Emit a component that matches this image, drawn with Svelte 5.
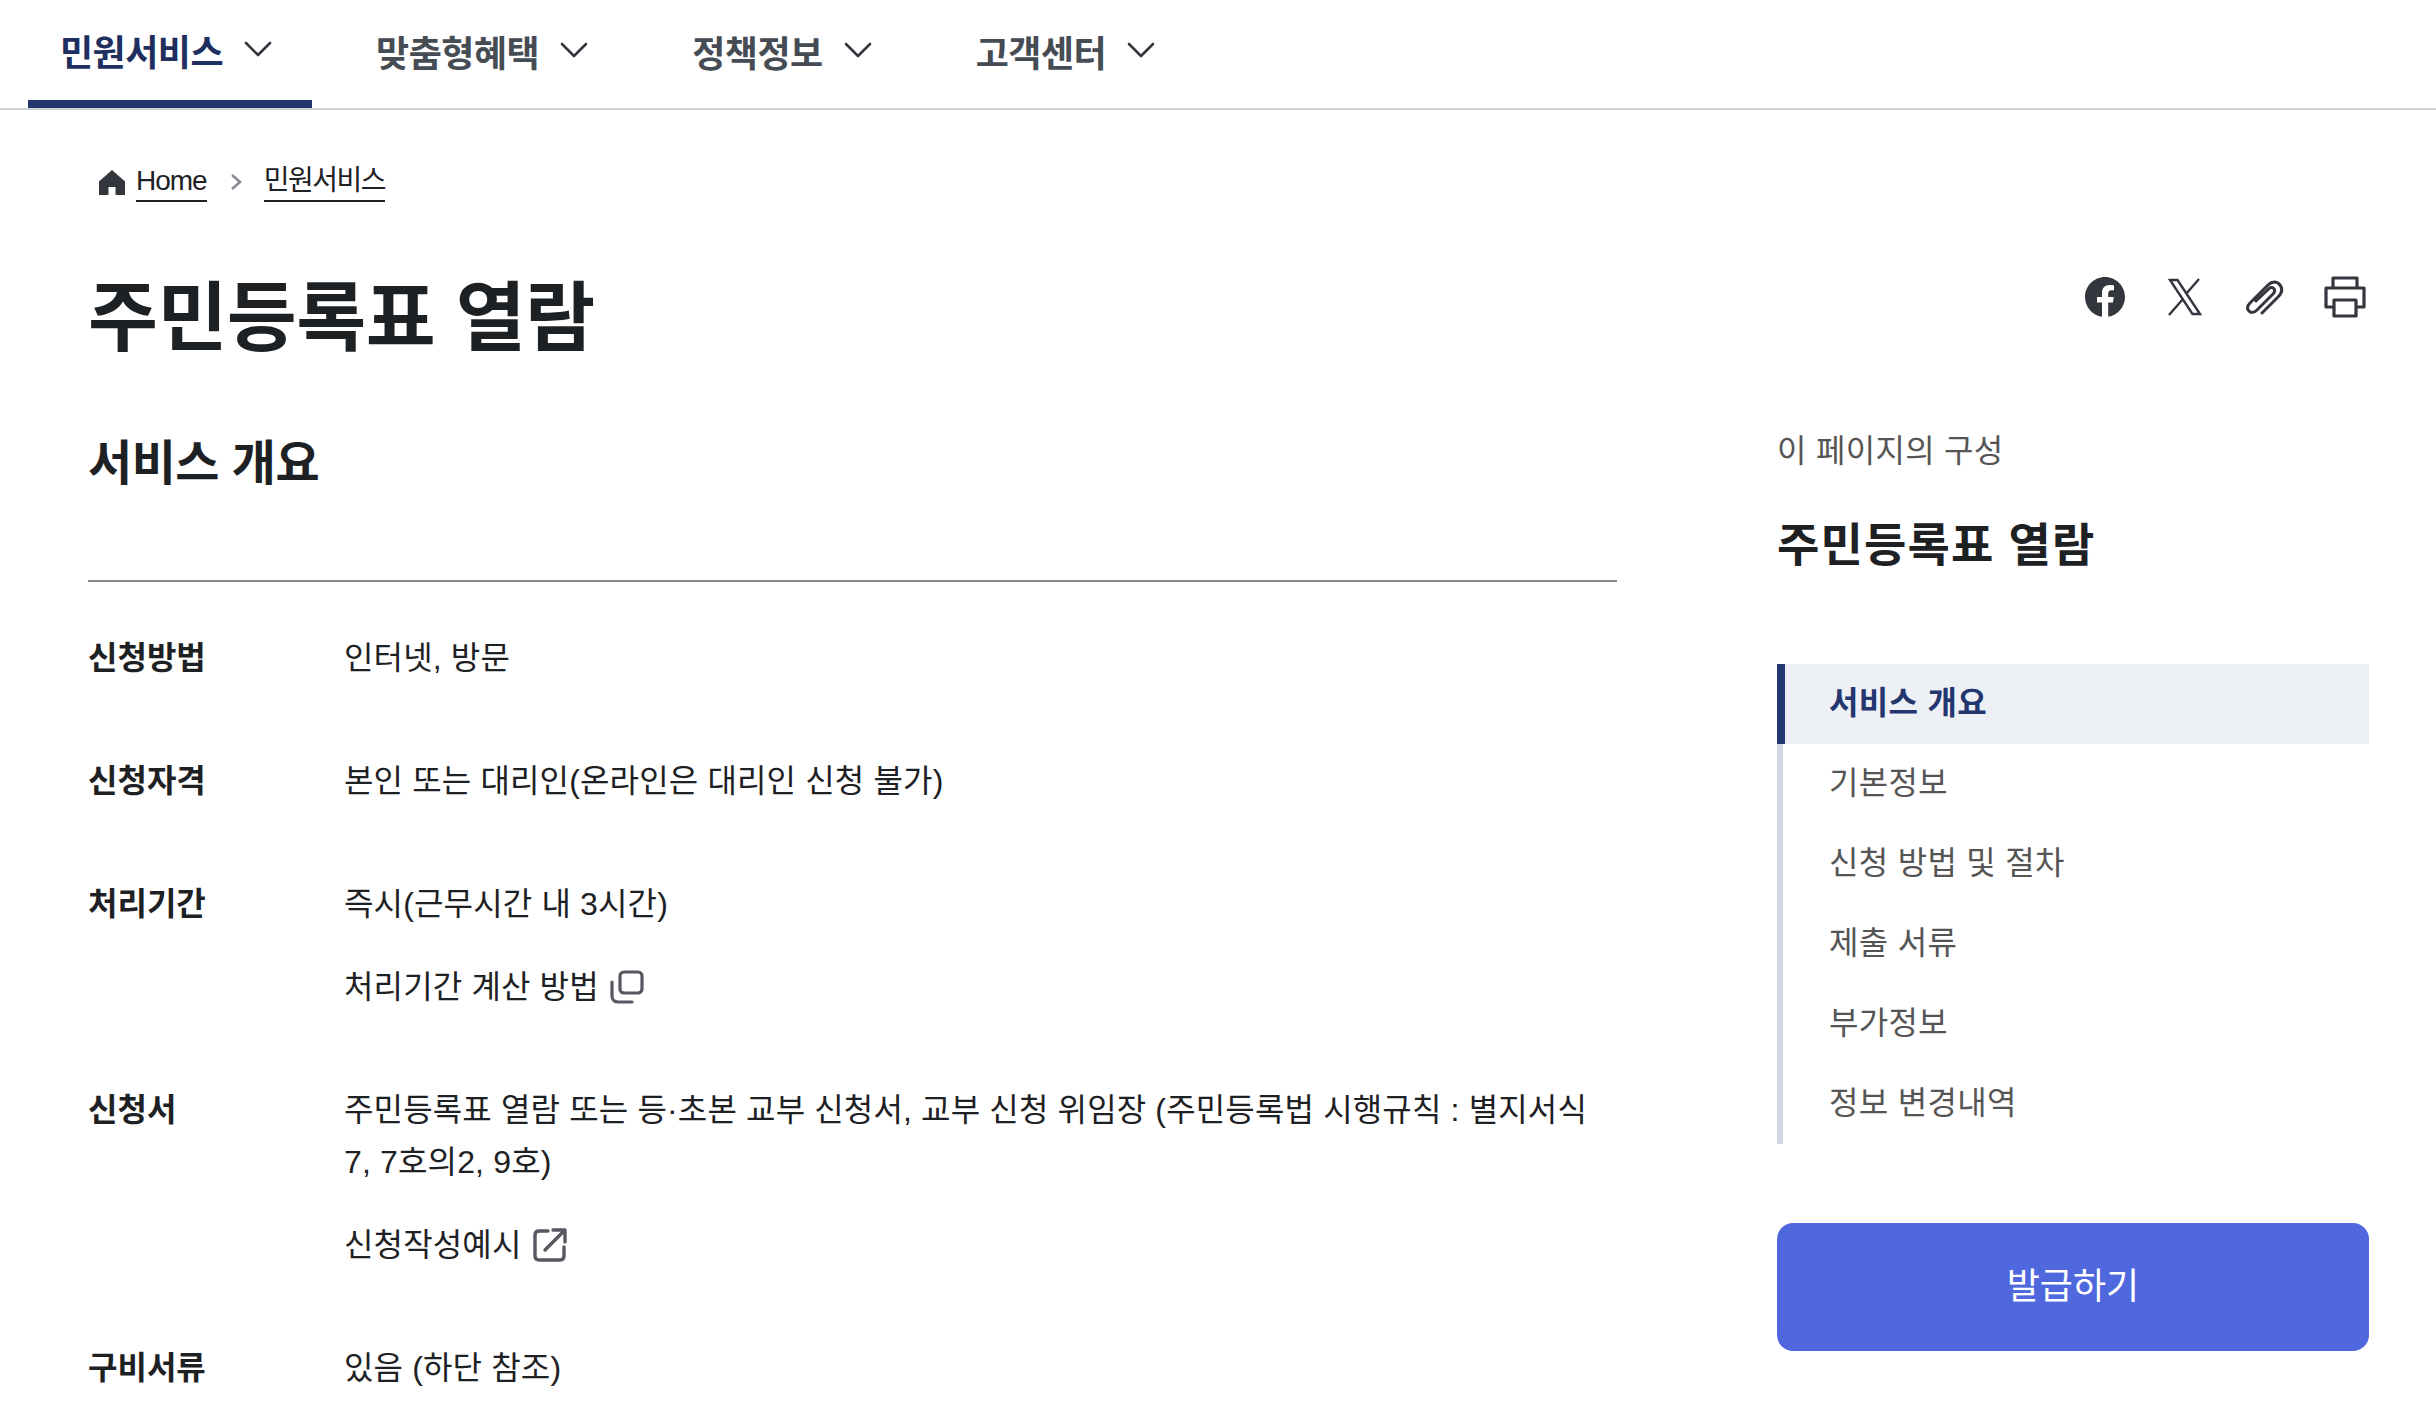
<script>
  const navItems = ['민원서비스', '맞춤형혜택', '정책정보', '고객센터'];
  const tocItems = ['서비스 개요', '기본정보', '신청 방법 및 절차', '제출 서류', '부가정보', '정보 변경내역'];
</script>

<div class="page">
  <nav class="nav">
    {#each navItems as item, i}
      <a class="nav-item" class:active={i === 0} href="#top">
        <span>{item}</span>
        <svg width="30" height="30" viewBox="0 0 30 30" fill="none" stroke="currentColor" stroke-width="2.6" stroke-linecap="round" stroke-linejoin="round"><path d="M3 8l12 12L27 8" /></svg>
      </a>
    {/each}
  </nav>

  <div class="crumbs">
    <svg class="home" width="28" height="28" viewBox="0 0 28 28"><path fill="#33363d" d="M14 2L1 13.500V27h9.500v-8h7v8H27V13.500z" /></svg>
    <a href="#top">Home</a>
    <svg class="sep" width="16" height="20" viewBox="0 0 16 20" fill="none" stroke="#8a8a94" stroke-width="2.6"><path d="M3 3l8 7-8 7" /></svg>
    <a class="crumb-ko" href="#top">민원서비스</a>
  </div>

  <header class="head">
    <h1>주민등록표 열람</h1>
    <div class="share">
      <svg width="42" height="42" viewBox="0 0 42 42"><path fill="#33363d" d="M41 21C41 10 32 1 21 1S1 10 1 21c0 10 7.300 18.300 17 19.800V26.500h-5V21h5v-4.200c0-5 3-7.800 7.600-7.800 2.200 0 4.400.4 4.400.4v4.900h-2.500c-2.500 0-3.300 1.500-3.300 3.100V21h5.600l-.9 5.500h-4.700v14.300C33.700 39.300 41 31 41 21z" /></svg>
      <svg width="42" height="42" viewBox="0 0 42 42" fill="none" stroke="#33363d" stroke-width="2.400"><path d="M6 4h7.500l22.500 34h-7.500zM35 3L22 18M19 23L5 39" /></svg>
      <svg width="42" height="42" viewBox="0 0 42 42" fill="none" stroke="#33363d" stroke-width="3" stroke-linecap="round"><path d="M18 37l16-16c4-4 5-8 2-12s-8-4-12 0L6 27c-3 3-3 6-1 8s5 2 8-1l16-16c2-2 2-4 .8-5.500s-3.500-1.300-5.300.5L12 25" /></svg>
      <svg width="42" height="42" viewBox="0 0 42 42" fill="none" stroke="#33363d" stroke-width="3.200" stroke-linejoin="round"><path d="M9 31H2V12h38v19h-7" /><path d="M9 12V2h24v10" /><path d="M10 24h22v16H10z" /></svg>
    </div>
  </header>

  <div class="layout">
    <main class="main">
      <h2>서비스 개요</h2>
      <dl class="info">
        <div class="row">
          <dt>신청방법</dt>
          <dd>인터넷, 방문</dd>
        </div>
        <div class="row">
          <dt>신청자격</dt>
          <dd>본인 또는 대리인(온라인은 대리인 신청 불가)</dd>
        </div>
        <div class="row">
          <dt>처리기간</dt>
          <dd>
            즉시(근무시간 내 3시간)
            <a class="sub" href="#top">
              처리기간 계산 방법
              <svg width="36" height="36" viewBox="0 0 36 36" fill="none" stroke="#55585f" stroke-width="3.200" stroke-linecap="round"><rect x="11" y="3" width="22" height="21" rx="4" /><path d="M3 13v14c0 4 3 6 6 6h14" /></svg>
            </a>
          </dd>
        </div>
        <div class="row">
          <dt>신청서</dt>
          <dd>
            주민등록표 열람 또는 등·초본 교부 신청서, 교부 신청 위임장 (주민등록법 시행규칙 : 별지서식 7, 7호의2, 9호)
            <a class="sub" href="#top">
              신청작성예시
              <svg width="36" height="36" viewBox="0 0 36 36" fill="none" stroke="#55585f" stroke-width="3.400" stroke-linecap="round" stroke-linejoin="round"><path d="M16 4H7C4.500 4 3 5.500 3 8v21c0 2.500 1.500 4 4 4h21c2.500 0 4-1.500 4-4v-9" /><path d="M13 23L33 3M21 3h12v12" /></svg>
            </a>
          </dd>
        </div>
        <div class="row">
          <dt>구비서류</dt>
          <dd>있음 (하단 참조)</dd>
        </div>
      </dl>
    </main>

    <aside class="side">
      <p class="side-label">이 페이지의 구성</p>
      <h3>주민등록표 열람</h3>
      <ul class="toc">
        {#each tocItems as item, i}
          <li class:current={i === 0}>{item}</li>
        {/each}
      </ul>
      <button class="issue">발급하기</button>
    </aside>
  </div>
</div>

<style>
  :global(body) {
    background: #fff;
  }
  .page {
    height: 1414px;
    overflow: hidden;
    font-family: "Liberation Sans", "Noto Sans CJK KR", sans-serif;
    color: #1e2124;
  }
  a {
    color: inherit;
    text-decoration: none;
  }
  .nav {
    display: flex;
    gap: 32px;
    height: 108px;
    padding-left: 28px;
    border-bottom: 2px solid #cdd1d5;
  }
  .nav-item {
    display: flex;
    align-items: center;
    gap: 20px;
    padding: 0 39px 6px 32px;
    height: 108px;
    box-sizing: border-box;
    font-size: 36px;
    font-weight: 700;
    letter-spacing: -0.500px;
    color: #464c53;
  }
  .nav-item svg {
    color: #33363d;
  }
  .nav-item.active {
    color: #1f2f60;
    border-bottom: 8px solid #233670;
    padding-bottom: 0;
  }
  .crumbs {
    display: flex;
    align-items: center;
    gap: 10px;
    padding: 52px 0 0 98px;
    font-size: 28px;
    letter-spacing: -1px;
  }
  .crumbs a {
    border-bottom: 2px solid #1e2124;
    line-height: 38px;
  }
  .crumbs .crumb-ko {
    letter-spacing: -1.500px;
  }
  .sep {
    margin: 0 9px 0 12px;
  }
  .head {
    display: flex;
    justify-content: space-between;
    align-items: flex-start;
    padding: 0 70px 0 88px;
  }
  h1 {
    margin: 67px 0 0;
    font-size: 76px;
    line-height: 100px;
    font-weight: 700;
    letter-spacing: -0.500px;
  }
  .share {
    display: flex;
    gap: 38px;
    margin-top: 74px;
  }
  .layout {
    display: flex;
    padding: 59px 67px 0 88px;
    justify-content: space-between;
  }
  .main {
    width: 1529px;
  }
  h2 {
    margin: 0;
    padding-bottom: 80px;
    border-bottom: 2px solid #8a8a8a;
    font-size: 48px;
    line-height: 72px;
    font-weight: 700;
    letter-spacing: -0.500px;
  }
  .info {
    margin: 50px 0 0;
  }
  .row {
    display: flex;
    margin-bottom: 71px;
    font-size: 32px;
    line-height: 52px;
    letter-spacing: 0.150px;
  }
  dt {
    width: 256px;
    flex-shrink: 0;
    font-weight: 700;
    letter-spacing: 0;
  }
  dd {
    margin: 0;
    padding-right: 20px;
  }
  .sub {
    display: flex;
    align-items: center;
    gap: 10px;
    margin-top: 31px;
  }
  .side {
    width: 592px;
    margin-top: -1px;
  }
  .side-label {
    margin: 0;
    font-size: 32px;
    line-height: 48px;
    letter-spacing: 0.300px;
    color: #555;
  }
  h3 {
    margin: 38px 0 0;
    font-size: 46px;
    line-height: 64px;
    font-weight: 700;
    letter-spacing: 1.200px;
  }
  .toc {
    list-style: none;
    margin: 87px 0 0;
    padding: 0;
    border-left: 6px solid #d0d8e6;
  }
  .toc li {
    height: 80px;
    margin-left: -6px;
    padding-left: 46px;
    border-left: 6px solid transparent;
    font-size: 32px;
    line-height: 78px;
    letter-spacing: 0.300px;
    color: #555;
  }
  .toc li.current {
    background: #edf0f5;
    border-left: 8px solid #233670;
    padding-left: 44px;
    font-weight: 700;
    color: #233670;
  }
  .issue {
    display: block;
    width: 100%;
    height: 128px;
    margin-top: 79px;
    border: none;
    border-radius: 16px;
    background: #5068de;
    color: #fff;
    font-family: inherit;
    font-size: 36px;
    line-height: 1;
  }
</style>
